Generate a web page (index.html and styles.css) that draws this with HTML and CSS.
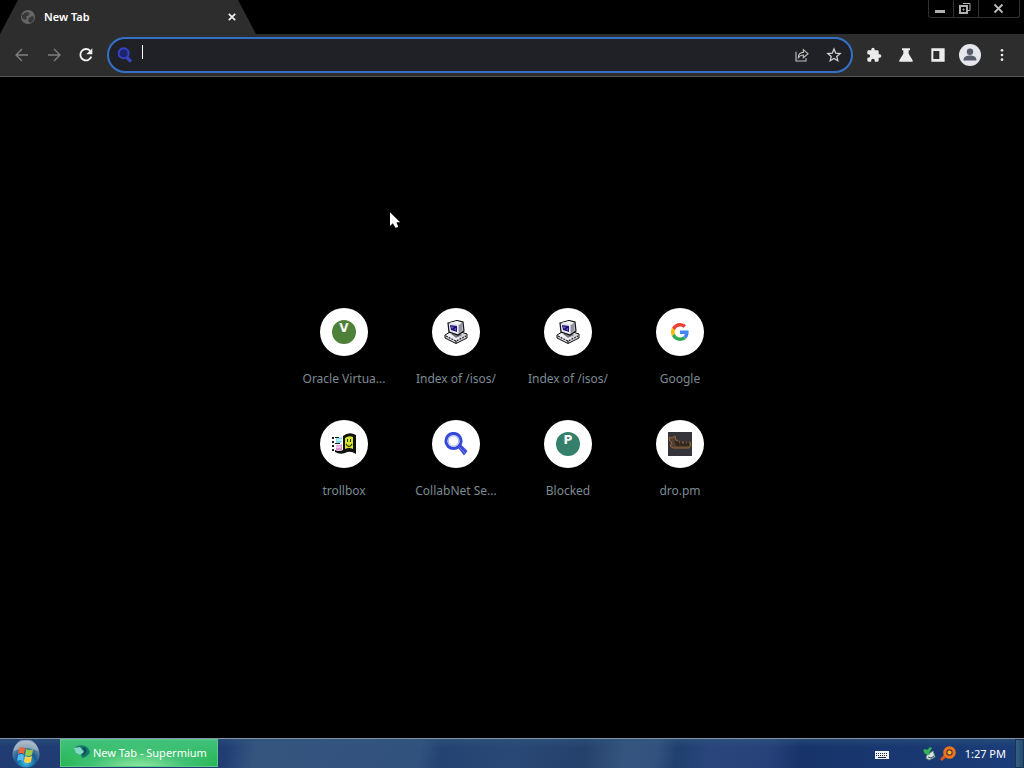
FILE: index.html
```html
<!DOCTYPE html>
<html lang="en">
<head>
<meta charset="utf-8">
<title>New Tab</title>
<link rel="stylesheet" href="styles.css">
</head>
<body>
<svg class="defs" aria-hidden="true">
  <symbol id="computer" viewBox="0 0 24 24">
    <path fill="#d2d2d8" stroke="#111" d="M1 15l5-3h11l6 2v4l-11 5.500-11-5.500z"/>
    <path fill="#f4f4f6" d="M2 15l5-2 9 5 6-3-10 6-10-5z"/>
    <path fill="none" stroke="#25252a" stroke-width="1.200" stroke-dasharray="2 1" d="M2 16l10 5 10-5M12 21v2"/>
    <path fill="#777786" d="M7 14l8-1 3 2-6 3z"/>
    <path fill="#c4c4ce" stroke="#111" stroke-width="1.200" d="M4 3l9-2.500 6 1.500 1 9-6 4-9-3z"/>
    <path fill="#f2f2f6" d="M5 3l8-2 5 2-4 2z"/>
    <path fill="#eeeef4" d="M5 4l9 1v9l-8-3z"/>
    <path fill="#19117d" d="M6 5l7 1v6l-6-2z"/>
    <path fill="#6762bb" d="M7 6l3 1-2 2zM10 9l2-1v3z"/>
    <path fill="#9292a4" d="M15 5l3-2v8l-3 2z"/>
  </symbol>
  <symbol id="lens" viewBox="0 0 24 24">
    <path d="M13.500 15l3-3 7 7-3.500 4.500z" fill="#3e4bd8"/>
    <circle cx="9.500" cy="9" r="7.600" fill="none" stroke="#3648d8" stroke-width="3"/>
    <circle cx="9.500" cy="9" r="5.200" fill="none" stroke="#9fadf7" stroke-width="1"/>
    <path d="M15.500 15.500l6 6" stroke="#7382ef" stroke-width="1"/>
  </symbol>
  <symbol id="lens-dark" viewBox="0 0 24 24">
    <path d="M15 16l6 6" stroke="#3846c8" stroke-width="5"/>
    <circle cx="10" cy="9.500" r="7.500" fill="#1c256c" stroke="#3443c6" stroke-width="3"/>
  </symbol>
</svg>

<header class="titlebar">
  <div class="tab">
    <svg class="tab-icon" viewBox="0 0 16 16"><circle cx="8" cy="8" r="7" fill="#666"/><path d="M2 6l4-3 4 1-2 3H6l1 2-2 2-3-2zM9 9l3-2 2 1-1 4-3 2-2-2z" fill="#383838"/></svg>
    <span class="tab-title">New Tab</span>
    <button class="tab-close" aria-label="Close tab"><svg viewBox="0 0 8 8"><path d="M.8.8l6.400 6.400M7.200.8L.8 7.200" stroke="#f1f1f1" stroke-width="1.700"/></svg></button>
  </div>
  <div class="controls">
    <button aria-label="Minimize"><svg viewBox="0 0 24 16"><path d="M6 9h10v3H6z" fill="#b0b0b0"/></svg></button>
    <button aria-label="Restore"><svg viewBox="0 0 24 16" fill="none" stroke="#b0b0b0"><path d="M6 5h7v7H6z" stroke-width="2"/><path d="M9 8h1v1H9zM9 2.500h7v7h-2"/></svg></button>
    <button class="close" aria-label="Close"><svg viewBox="0 0 24 16"><path d="M7.500 3.500l8 8M15.500 3.500l-8 8" stroke="#bdbdbd" stroke-width="1.800"/></svg></button>
  </div>
</header>

<nav class="toolbar">
  <button class="tool" aria-label="Back"><svg viewBox="0 0 24 24"><path d="M21 12H4M12 3l-9 9 9 9" fill="none" stroke="#808080" stroke-width="2"/></svg></button>
  <button class="tool" aria-label="Forward"><svg viewBox="0 0 24 24"><path d="M3 12h17M12 3l9 9-9 9" fill="none" stroke="#808080" stroke-width="2"/></svg></button>
  <button class="tool" aria-label="Reload"><svg viewBox="0 0 24 24"><path d="M20 14.500a8.500 8.500 0 1 1-1.800-8.800" fill="none" stroke="#f1f1f1" stroke-width="2.800"/><path d="M21.500 2v9h-9z" fill="#f1f1f1"/></svg></button>
  <div class="omnibox">
    <svg class="search-icon"><use href="#lens-dark"/></svg>
    <span class="caret"></span>
    <input class="address" type="text" aria-label="Address and search bar">
    <button class="tool" aria-label="Share"><svg viewBox="0 0 24 24" fill="none" stroke="#c0c0c0" stroke-width="1.700"><path d="M3 7v14h15v-4"/><path d="M6.500 16c0-5 3-8 7.500-8V4l7 6-7 6v-4c-3 0-5.500 1-7.500 4z"/></svg></button>
    <button class="tool" aria-label="Bookmark"><svg viewBox="0 0 24 24"><path d="M12 3l2.600 6.200 6.700.6-5.100 4.400 1.500 6.500-5.700-3.400-5.700 3.400 1.500-6.500-5.100-4.400 6.700-.6z" fill="none" stroke="#d2d2d2" stroke-width="1.900"/></svg></button>
  </div>
  <button class="tool" aria-label="Extensions"><svg viewBox="0 0 24 24"><path fill="#ececec" d="M20.500 11H19V7c0-1.100-.9-2-2-2h-4V3.500a2.500 2.500 0 0 0-5 0V5H4c-1.100 0-2 .9-2 2v3.800h1.500a2.700 2.700 0 0 1 0 5.400H2V20c0 1.100.9 2 2 2h3.800v-1.500a2.700 2.700 0 0 1 5.400 0V22H17c1.100 0 2-.9 2-2v-4h1.500a2.500 2.500 0 0 0 0-5z"/></svg></button>
  <button class="tool" aria-label="Experiments"><svg viewBox="0 0 24 24"><path fill="#ececec" d="M6 2h12v3h-2v5l6 10v2H2v-2l6-10V5H6z"/></svg></button>
  <button class="tool" aria-label="Side panel"><svg viewBox="0 0 24 24"><path fill="#ececec" fill-rule="evenodd" d="M2 2h20v20H2zm3 4v12h9V6z"/></svg></button>
  <button class="tool avatar" aria-label="Profile"><svg viewBox="0 0 24 24"><circle cx="12" cy="12" r="12" fill="#e6e7ec"/><circle cx="12" cy="8.500" r="3.500" fill="#565d6b"/><path d="M5 17c0-6 14-6 14 0v1H5z" fill="#565d6b"/></svg></button>
  <button class="tool" aria-label="Menu"><svg viewBox="0 0 24 24" fill="#ececec"><circle cx="12" cy="5" r="2"/><circle cx="12" cy="12" r="2"/><circle cx="12" cy="19" r="2"/></svg></button>
</nav>

<main class="page">
  <div class="shortcuts">
    <a class="tile" href="#"><span class="disc"><span class="letter">V</span></span><span class="label">Oracle Virtua...</span></a>
    <a class="tile" href="#"><span class="disc"><svg><use href="#computer"/></svg></span><span class="label">Index of /isos/</span></a>
    <a class="tile" href="#"><span class="disc"><svg><use href="#computer"/></svg></span><span class="label">Index of /isos/</span></a>
    <a class="tile" href="#"><span class="disc"><svg viewBox="-8 -8 64 64"><path fill="#EA4335" d="M24 9.500c3.540 0 6.710 1.220 9.210 3.600l6.850-6.850C35.900 2.380 30.470 0 24 0 14.620 0 6.510 5.380 2.560 13.220l7.980 6.190C12.430 13.720 17.740 9.500 24 9.500z"/><path fill="#4285F4" d="M46.980 24.550c0-1.570-.15-3.090-.38-4.550H24v9.020h12.940c-.58 2.960-2.260 5.480-4.780 7.180l7.730 6c4.510-4.180 7.090-10.360 7.090-17.650z"/><path fill="#FBBC05" d="M10.530 28.590A14.500 14.500 0 0 1 10.530 19.410l-7.980-6.190a24 24 0 0 0 0 21.560z"/><path fill="#34A853" d="M24 48c6.480 0 11.930-2.130 15.890-5.810l-7.730-6c-2.150 1.450-4.920 2.300-8.160 2.300-6.260 0-11.570-4.220-13.470-9.910l-7.980 6.190C6.510 42.620 14.620 48 24 48z"/></svg></span><span class="label">Google</span></a>
    <a class="tile" href="#"><span class="disc"><svg viewBox="0 0 24 24"><path d="M11 4q6-5 13-1v19q-6-4-11-1-5 2-10-1v-2q4 2 8 0z" fill="#111"/><path d="M13 6q4-3 8-1v12q-4-2-8 0z" fill="#d9e52c"/><path d="M15 7h1v3h-1zM18 7h1v3h-1z" fill="#263010"/><path d="M14 12q3 5 6 0" fill="none" stroke="#263010" stroke-width="1.300"/><path d="M4 6q3 0 6-1v5q-3 2-6 1z" fill="#86dce6"/><path d="M4 13q3 1 6-1v6q-3 1-6 0z" fill="#de91d2"/><path d="M0 5h2v2H0zM0 9h2v2H0zM0 13h2v2H0zM0 17h2v2H0zM3 5h4v1H3zM3 11h5v1H3z" fill="#222"/><path d="M5 8h5M4 15h5" stroke="#fff"/></svg></span><span class="label">trollbox</span></a>
    <a class="tile" href="#"><span class="disc"><svg><use href="#lens"/></svg></span><span class="label">CollabNet Se...</span></a>
    <a class="tile" href="#"><span class="disc"><span class="letter teal">P</span></span><span class="label">Blocked</span></a>
    <a class="tile" href="#"><span class="disc"><svg viewBox="0 0 24 24"><path fill="#34343a" d="M0 0h24v24H0z"/><path d="M2 5l2 1 3-2 1 4 4 2h10l1 3-2 3H5l-3-2 2-3-3-3z" fill="#54402f" stroke="#94683c"/><path d="M7 9l2 4h12M10 9v3m3-3v3m4-3v3m3-3v4" fill="none" stroke="#27211f" stroke-width="1.500"/></svg></span><span class="label">dro.pm</span></a>
  </div>
  <svg class="pointer" viewBox="0 0 12 18" aria-hidden="true"><path d="M0 0v15l3-3 3 5 3-1-2-5h4z" fill="#fff"/></svg>
</main>

<footer class="taskbar">
  <button class="start" aria-label="Start">
    <svg viewBox="0 0 28 28"><defs><radialGradient id="orb" cx="50%" cy="80%" r="75%"><stop offset="0" stop-color="#35c6ef"/><stop offset=".5" stop-color="#185b91"/><stop offset="1" stop-color="#8fa3b5"/></radialGradient></defs><circle cx="14" cy="14" r="13.500" fill="url(#orb)"/><path d="M2 11a12 12 0 0 1 24 0q-12-6-24 0" fill="#c8d4dc" opacity=".5"/><path d="M7 8q3-2 6 0l-1 6q-3-2-6 0z" fill="#e9693a"/><path d="M14 9q3 2 7 0l-1 6q-4 2-7 0z" fill="#9acb48"/><path d="M6 15q3-2 6 0l-1 6q-3-2-6 0z" fill="#55b8ee"/><path d="M13 16q3 2 7 0l-1 6q-4 2-7 0z" fill="#ffd044"/></svg>
  </button>
  <button class="task">
    <svg viewBox="0 0 16 16"><path d="M1 3q8-4 13 1l2 4q-2 5-8 6l-1-3-4-1z" fill="#16766c"/><path d="M0 4l6-1 4 5-4 3-4-2z" fill="#83d8c5"/><path d="M9 4q5 2 0 7" fill="none" stroke="#0b514f" stroke-width="2"/></svg>
    <span>New Tab - Supermium</span>
  </button>
  <div class="tray">
    <svg class="keyboard" viewBox="0 0 14 10"><path d="M0 1h14v8H0z" fill="#f2f2f2"/><path d="M1 3.500h12M1 5.500h12" stroke="#162849" stroke-dasharray="1 1"/><path d="M3 7.500h8" stroke="#162849"/></svg>
    <svg class="usb" viewBox="0 0 14 14"><path d="M4 8l6-4 2 6-6 3-3-2z" fill="#d9e4df" stroke="#708d8d"/><path d="M5 10l3 1 3-2" fill="none" stroke="#31525d"/><path d="M0 3l3-1 1 1 3-3 2 1-3 5 1 2-5-1z" fill="#35b456"/></svg>
    <svg class="find" viewBox="0 0 16 16"><path d="M6 9L1 14" stroke="#d65b1b" stroke-width="3"/><circle cx="9.500" cy="6.500" r="4.800" fill="#653829" stroke="#ed7420" stroke-width="3"/><circle cx="9.500" cy="6.500" r="2" fill="#f0b12c"/></svg>
    <time class="clock">1:27 PM</time>
    <button class="desktop" aria-label="Show desktop"></button>
  </div>
</footer>
</body>
</html>
```
FILE: styles.css
```css
* { box-sizing: border-box; }
body {
  display: flex;
  flex-direction: column;
  min-height: 100vh;
  margin: 0;
  background: #000;
  color: #fff;
  font-family: "Noto Sans", "Open Sans", sans-serif;
  font-size: 12px;
}
button { padding: 0; border: 0; background: none; color: inherit; font: inherit; }
svg { display: block; flex: none; }
.defs { position: absolute; width: 0; height: 0; }

.titlebar { display: flex; justify-content: space-between; align-items: flex-start; height: 34px; }
.tab {
  display: flex;
  align-items: center;
  width: 256px;
  height: 34px;
  padding: 0 20px;
  background: #2d2d2d;
  clip-path: polygon(18px 0, 238px 0, 100% 100%, 0 100%);
}
.tab-icon { width: 16px; height: 16px; }
.tab-title { flex: 1; padding: 0 0 2px 8px; font-size: 11px; font-weight: 600; }
.tab-close { display: grid; place-items: center; width: 8px; height: 16px; }
.tab-close svg { width: 8px; height: 8px; }
.controls { display: flex; height: 18px; margin-right: 4px; border: 1px solid #303030; border-top: 0; border-radius: 0 0 3px 3px; }
.controls button { display: grid; place-items: center; width: 25px; border-right: 1px solid #303030; }
.controls svg { width: 24px; height: 16px; }
.controls .close { width: 40px; border: 0; }

.toolbar { display: flex; align-items: center; height: 43px; padding: 0 6px; border-bottom: 1px solid #555; background: #2d2d2d; }
.tool { display: grid; flex: none; place-items: center; width: 32px; height: 32px; }
.tool svg { width: 16px; height: 16px; }
.avatar svg { width: 22px; height: 22px; }
.omnibox {
  display: flex;
  flex: 1;
  align-items: center;
  height: 36px;
  margin: 0 5px;
  padding: 0 1px 0 8px;
  border: 2px solid #3471c6;
  border-radius: 18px;
  background: #202126;
}
.search-icon { width: 16px; height: 16px; }
.caret { width: 1px; height: 14px; margin: 0 0 6px 9px; background: #fff; }
.address { flex: 1; min-width: 0; border: 0; outline: 0; background: none; color: #fff; font: inherit; }

.page { position: relative; flex: 1; padding: 215px 16px 32px; }
.shortcuts { display: grid; grid-template-columns: repeat(4, 112px); justify-content: center; }
.tile { display: flex; flex-direction: column; align-items: center; gap: 14px; height: 112px; padding-top: 16px; color: #7c8a91; text-decoration: none; }
.disc { display: grid; place-items: center; width: 48px; height: 48px; border-radius: 50%; background: #fff; }
.disc svg { width: 24px; height: 24px; }
.letter { width: 24px; height: 24px; border-radius: 50%; background: #4d8038; color: #fff; font: bold 12px/16px "DejaVu Sans", sans-serif; text-align: center; }
.teal { background: #35806a; }
.label { font-size: 12px; line-height: 18px; white-space: nowrap; }
.pointer { position: absolute; top: 135px; left: 390px; width: 11px; height: 17px; }

.taskbar {
  display: flex;
  align-items: stretch;
  height: 30px;
  border-top: 1px solid #8794a8;
  background: linear-gradient(#2d577c88, transparent 8px), linear-gradient(100deg, #203c72 22%, #35557f 25%, #32527e 41%, #254372 43%, #2a4875 50%, #24416c 57%, #35557f 61%, #34527e 64%, #20406e 66%, #29457a 69%, #27427a 75%, #17336a 78%, #1b3d79);
}
.start { width: 32px; margin-left: 10px; }
.start svg { width: 28px; height: 28px; margin-left: 2px; }
.task {
  display: flex;
  align-items: center;
  gap: 3px;
  width: 158px;
  margin: 0 0 1px 18px;
  padding: 0 0 2px 13px;
  border: 1px solid #58c989;
  background: radial-gradient(ellipse at 50% 120%, #a2f0a9 0, #42c276 45%, transparent 75%), linear-gradient(#42c17d, #24b64f);
  font-size: 11px;
  white-space: nowrap;
}
.task svg { width: 16px; height: 16px; }
.tray { display: flex; align-items: center; margin-left: auto; }
.keyboard { width: 14px; height: 10px; margin: 2px 34px 0 0; }
.usb { width: 14px; height: 14px; margin-right: 3px; }
.find { width: 16px; height: 16px; }
.clock { margin: 0 9px 0 9px; padding-bottom: 1px; font-size: 11px; }
.desktop { align-self: stretch; width: 9px; border: 1px solid #183450; background: linear-gradient(90deg, #365f84, #234b70); }
```
